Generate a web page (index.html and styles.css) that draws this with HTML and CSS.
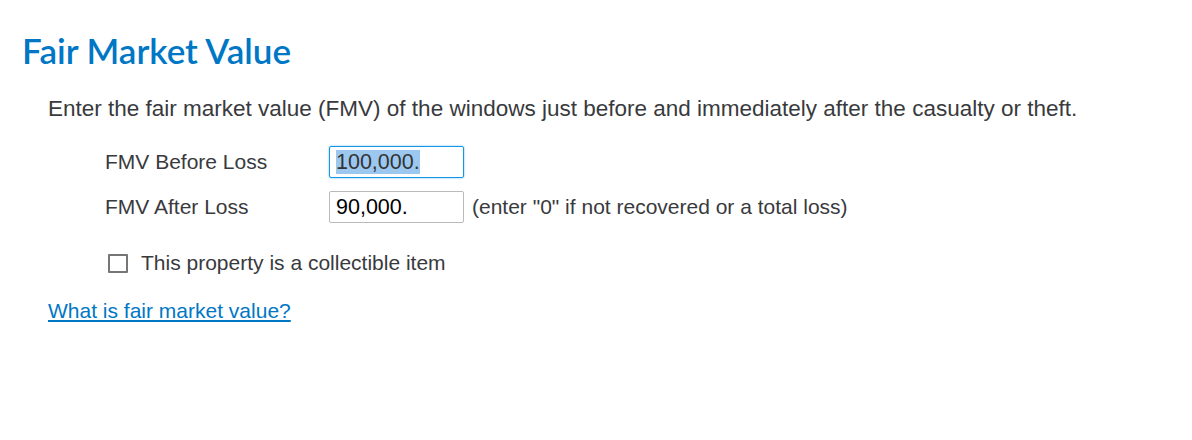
FILE: index.html
```html
<!DOCTYPE html>
<html>
<head>
<meta charset="utf-8">
<link rel="stylesheet" href="styles.css">
</head>
<body>
<main class="page">
  <h1 class="title">Fair Market Value</h1>
  <div class="content">
    <p class="intro">Enter the fair market value (FMV) of the windows just before and immediately after the casualty or theft.</p>
    <div class="fields">
      <div class="row">
        <label class="label">FMV Before Loss</label>
        <div class="input focused"><span class="sel">100,000.</span></div>
      </div>
      <div class="row">
        <label class="label">FMV After Loss</label>
        <div class="input">90,000.</div>
        <span class="hint">(enter "0" if not recovered or a total loss)</span>
      </div>
      <div class="check-row">
        <span class="checkbox"></span>
        <span class="check-label">This property is a collectible item</span>
      </div>
    </div>
    <a class="link" href="#">What is fair market value?</a>
  </div>
</main>
</body>
</html>
```
FILE: styles.css
```css
html, body {
  margin: 0;
  padding: 0;
  background: #fff;
}
.page {
  padding: 28px 0 0 22px;
  font-family: "Liberation Sans", Arial, sans-serif;
  color: #393a3d;
}
.title {
  margin: 0;
  font-family: Lato, "Open Sans", sans-serif;
  font-weight: 600;
  font-size: 35px;
  line-height: 44px;
  color: #0077c5;
}
.content {
  padding-left: 26px;
}
.intro {
  margin: 24px 0 0 0;
  font-size: 22.5px;
  line-height: 26px;
}
.fields {
  padding-left: 57px;
  margin-top: 17px;
  display: flex;
  flex-direction: column;
}
.row {
  display: flex;
  align-items: center;
  height: 45px;
}
.label {
  width: 224px;
  font-size: 21px;
}
.input {
  box-sizing: border-box;
  width: 135px;
  height: 32px;
  border: 1px solid #bababa;
  border-radius: 2px;
  padding: 0 6px;
  font-size: 21.5px;
  line-height: 30px;
  color: #000;
}
.input.focused {
  border-color: #1598e3;
  box-shadow: 0 0 2px #5cb3f0;
}
.sel {
  background: #9cc8f0;
  color: #333;
}
.hint {
  margin-left: 8px;
  font-size: 21px;
}
.check-row {
  display: flex;
  align-items: center;
  margin-top: 22px;
  margin-left: 3px;
}
.checkbox {
  box-sizing: border-box;
  width: 20px;
  height: 19px;
  border: 2px solid #767676;
  border-radius: 1px;
  background: #fff;
}
.check-label {
  margin-left: 13px;
  font-size: 21px;
}
.link {
  display: inline-block;
  margin-top: 24px;
  font-size: 21px;
  color: #0077c5;
  text-decoration: underline;
}
```
